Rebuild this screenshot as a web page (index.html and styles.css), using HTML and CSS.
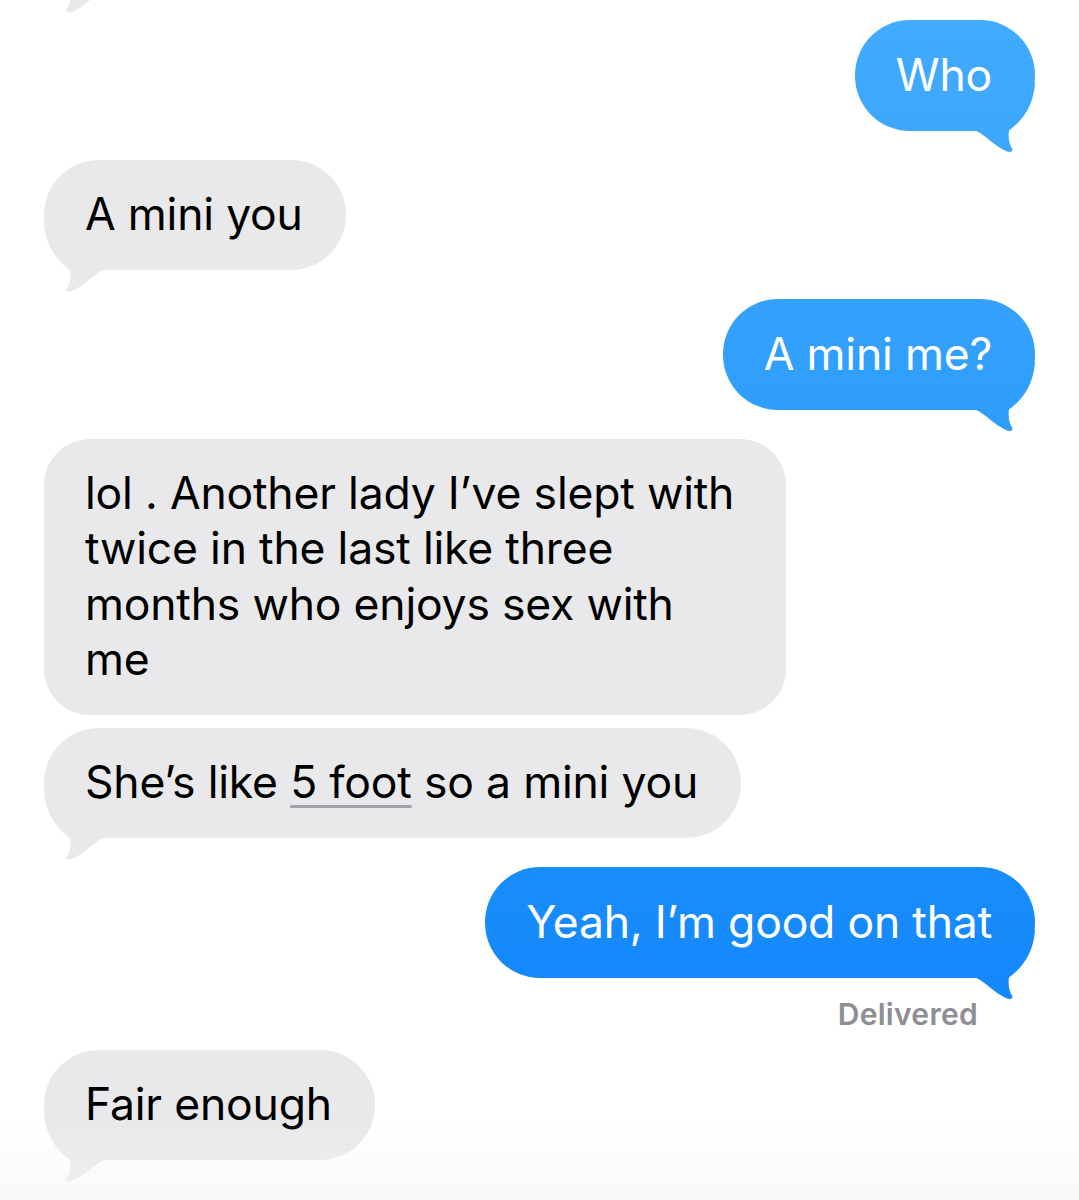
FILE: index.html
```html
<!DOCTYPE html>
<html lang="en">
<head>
    <meta charset="UTF-8">
    <meta name="viewport" content="width=device-width, initial-scale=1.0">
    <title>Messages</title>
    <link rel="stylesheet" href="styles.css">
</head>
<body>
    <div class="thread">
        <!-- tail of the message above, scrolled out of view -->
        <div class="row in cut">
            <div class="bubble gray earlier"><span class="tail"></span></div>
        </div>

        <div class="row out">
            <div class="bubble blue">Who<span class="tail"></span></div>
        </div>

        <div class="row in">
            <div class="bubble gray">A mini you<span class="tail"></span></div>
        </div>

        <div class="row out">
            <div class="bubble blue">A mini me?<span class="tail"></span></div>
        </div>

        <div class="row in">
            <div class="bubble gray wide">lol . Another lady I’ve slept with twice in the last like three months who enjoys sex with me</div>
        </div>
        <div class="row in grouped">
            <div class="bubble gray">She’s like <span class="link">5 foot</span> so a mini you<span class="tail"></span></div>
        </div>

        <div class="row out">
            <div class="bubble blue">Yeah, I’m good on that<span class="tail"></span></div>
        </div>
        <div class="status">Delivered</div>

        <div class="row in last">
            <div class="bubble gray">Fair enough<span class="tail"></span></div>
        </div>
    </div>
    <div class="bottom-fade"></div>
</body>
</html>
```

FILE: styles.css
```css
body {
    margin: 0;
    background-color: #ffffff;
    font-family: Inter, "Noto Sans", "Liberation Sans", sans-serif;
    height: 1200px;
    overflow: hidden;
}

.thread {
    display: flex;
    flex-direction: column;
    padding: 0 44px;
}

.row {
    display: flex;
    margin-top: 29px;
}

.row.in {
    justify-content: flex-start;
}

.row.out {
    justify-content: flex-end;
}

.row.cut {
    margin-top: -119px;
}

.row.grouped {
    margin-top: 13px;
}

.row.last {
    margin-top: 18px;
}

.bubble {
    position: relative;
    isolation: isolate;
    padding: 27.5px 43px 27.5px 41px;
    border-radius: 55px;
    font-size: 44.5px;
    line-height: 55.5px;
    letter-spacing: -0.2px;
}

.bubble.gray {
    background-color: #e9e9eb;
    color: #000000;
}

.bubble.blue {
    background: linear-gradient(to bottom, #42acfd 0px, #0a81fb 1200px) fixed;
    color: #ffffff;
}

.bubble.wide {
    box-sizing: border-box;
    width: 742px;
    padding-top: 27px;
    padding-bottom: 27px;
    border-radius: 46px;
}

.earlier {
    width: 228px;
    height: 110px;
    padding: 0;
}

/* the little curl under the last bubble of a group */
.tail {
    position: absolute;
    z-index: -1;
    bottom: -22px;
    width: 70px;
    height: 70px;
}

.gray .tail {
    left: 0;
    background-color: #e9e9eb;
    clip-path: path('M0 0 C1 22, 12 38, 26 48 C27 54, 26 62, 23 66 C21 69, 25 70, 28 69 C40 64, 50 52, 60 48 L60 0 Z');
}

.blue .tail {
    right: 0;
    background: linear-gradient(to bottom, #42acfd 0px, #0a81fb 1200px) fixed;
    clip-path: path('M70 0 C69 22, 58 38, 44 48 C43 54, 44 62, 47 66 C49 69, 45 70, 42 69 C30 64, 20 52, 10 48 L10 0 Z');
}

.link {
    text-decoration: underline;
    text-decoration-color: #a3a3a8;
    text-decoration-thickness: 3px;
    text-underline-offset: 7px;
}

.status {
    align-self: flex-end;
    margin: 18px 57px 0 0;
    font-size: 30px;
    line-height: 36px;
    font-weight: 600;
    letter-spacing: 0.3px;
    color: #8e8e93;
}

.bottom-fade {
    position: fixed;
    left: 0;
    right: 0;
    bottom: 0;
    height: 80px;
    background: linear-gradient(to bottom, rgba(246, 246, 246, 0), rgba(244, 244, 244, 0.55));
    pointer-events: none;
}
```
